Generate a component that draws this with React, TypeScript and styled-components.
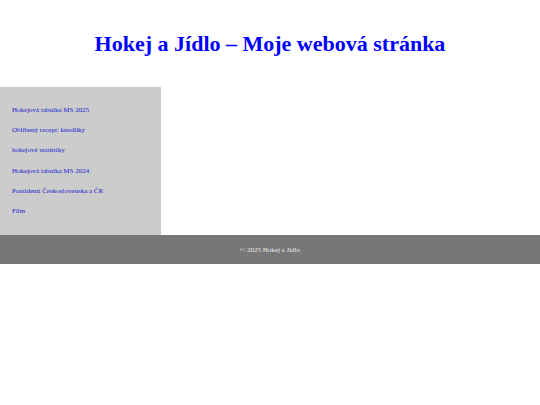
import React from 'react';
import styled, { createGlobalStyle } from 'styled-components';

const GlobalStyle = createGlobalStyle`
    body {
        margin: 0;
        background: #ffffff;
        font-family: "Liberation Serif", "Times New Roman", serif;
    }
`

const links: string[] = [
    'Hokejová tabulka MS 2025',
    'Oblíbený recept: knedlíky',
    'hokejové statistiky',
    'Hokejová tabulka MS 2024',
    'Prezidenti Československa a ČR',
    'Film',
]

const App = (): any => {
    return (
        <>
            <GlobalStyle />
            <Header>
                <Title>Hokej a Jídlo – Moje webová stránka</Title>
            </Header>
            <Layout>
                <Sidebar>
                    {links.map((text) => (
                        <NavLink key={text} href="#">{text}</NavLink>
                    ))}
                </Sidebar>
                <Main />
            </Layout>
            <Footer>© 2025 Hokej a Jídlo</Footer>
        </>
    );
}

const Header = styled.header`
    height: 87px;
    display: flex;
    align-items: center;
    justify-content: center;
`
const Title = styled.h1`
    margin: 0;
    font-size: 22px;
    font-weight: bold;
    color: #0000ff;
`
const Layout = styled.div`
    display: flex;
`
const Sidebar = styled.nav`
    width: 161px;
    height: 148px;
    box-sizing: border-box;
    background: #cccccc;
    padding: 19px 12px 0;
    display: flex;
    flex-direction: column;
    gap: 11.7px;
`
const NavLink = styled.a`
    font-size: 7px;
    line-height: 8.5px;
    color: #2222cc;
    text-decoration: none;
`
const Main = styled.main`
    flex: 1;
`
const Footer = styled.footer`
    height: 29px;
    background: #777777;
    color: #eeeeee;
    font-size: 7px;
    display: flex;
    align-items: center;
    justify-content: center;
`

export default App;
